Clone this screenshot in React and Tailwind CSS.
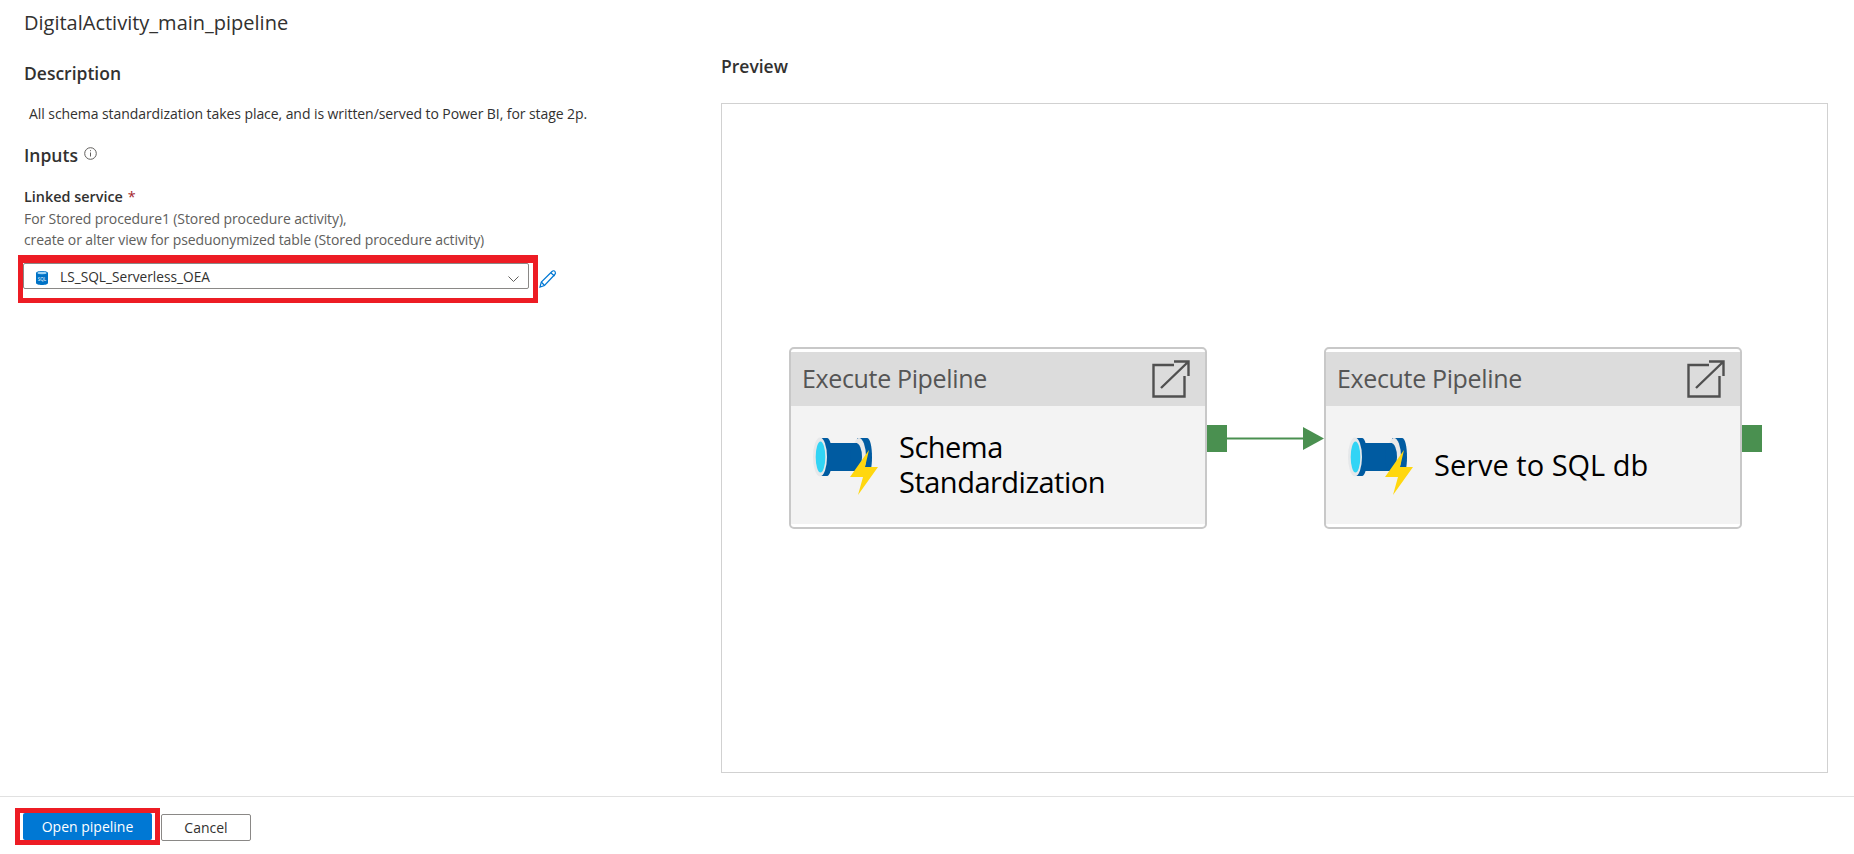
import React from 'react';

const font = { fontFamily: '"Open Sans", "Noto Sans", sans-serif' };

// Pipeline glyph: barrel with a lightning bolt over it
const PipelineIcon = () => (
  <svg width="66" height="58" viewBox="0 0 66 58" className="shrink-0">
    <path d="M6 1h8c3 0 5 8 5 19s-2 19-5 19H6z" fill="#005ba1" />
    <path d="M44 1h10c3 0 5 8 5 19s-2 19-5 19H44z" fill="#005ba1" />
    <ellipse cx="46" cy="20" rx="7" ry="19" fill="#e8e8e8" />
    <rect x="12" y="6" width="32" height="28" fill="#005ba1" />
    <ellipse cx="43" cy="20" rx="6" ry="14" fill="#005ba1" />
    <ellipse cx="7" cy="20" rx="7" ry="19.5" fill="#e6e8ea" />
    <ellipse cx="7.5" cy="20" rx="4.8" ry="15.5" fill="#32d4f5" />
    <path d="M56 13 37 40h13l-5 18 20-28H52z" fill="#ffd70f" />
  </svg>
);

const ExternalIcon = () => (
  <svg width="38" height="38" viewBox="0 0 38 38" fill="none" stroke="#505050" strokeWidth="2.4" className="shrink-0">
    <path d="M22 5H1.5v31.5h31V16" />
    <path d="M9 28 36.5 1.5M22 1.5h14.5V16" />
  </svg>
);

const PipelineCard = ({ children }) => (
  <div className="w-[418px] h-[182px] shrink-0 rounded-[5px] border-2 border-[#c8c8c8] bg-white py-[3px] flex flex-col">
    <div className="h-[54px] bg-[#dcdcdc] flex items-center justify-between pl-[11px] pr-[15px]">
      <span className="text-[25px] text-[#555555] tracking-[-0.35px]">Execute Pipeline</span>
      <ExternalIcon />
    </div>
    <div className="flex-1 bg-[#f3f3f3] flex items-start pl-[22px] pt-[31px]">
      <PipelineIcon />
      <div className="ml-[20px] -mt-[9px] h-[72px] flex items-center text-[29px] leading-[35px] text-black">
        {children}
      </div>
    </div>
  </div>
);

const GreenHandle = () => <div className="w-[20px] h-[27px] bg-[#4a9050] shrink-0" />;

const Connector = () => (
  <svg width="97" height="27" viewBox="0 0 97 27" className="shrink-0">
    <line x1="0" y1="13.5" x2="80" y2="13.5" stroke="#4a9050" strokeWidth="2" />
    <path d="M76 2l21 11.5L76 25z" fill="#4a9050" />
  </svg>
);

export default function App() {
  return (
    <div className="w-[1854px] h-[854px] bg-white flex flex-col overflow-hidden text-[#323130]" style={font}>
      <div className="h-[796px] flex">
        <div className="w-[721px] shrink-0 pl-[24px]">
          <div className="h-[45px] flex items-center text-[20px] text-[#323130]">DigitalActivity_main_pipeline</div>
          <div className="h-[56px] flex items-center text-[17.5px] font-semibold">Description</div>
          <div className="h-[24px] flex items-center pl-[5px] text-[14px] tracking-[-0.07px]">All schema standardization takes place, and is written/served to Power BI, for stage 2p.</div>
          <div className="mt-[10px] h-[40px] flex items-center text-[17.5px] font-semibold">
            Inputs
            <svg width="13" height="13" viewBox="0 0 13 13" fill="none" stroke="#605e5c" strokeWidth="1" className="ml-[6px] -mt-[4px]">
              <circle cx="6.5" cy="6.5" r="5.8" />
              <path d="M6.5 5.5v4M6.5 3.2v1" />
            </svg>
          </div>
          <div className="mt-[10px] h-[24px] flex items-center text-[14.4px] font-semibold">
            Linked service
            <span className="ml-[5px] text-[#a4262c] font-normal">*</span>
          </div>
          <div className="-mt-[1px] text-[14px] leading-[21px] tracking-[-0.1px] text-[#605e5c]">
            <div>For Stored procedure1 (Stored procedure activity),</div>
            <div>create or alter view for pseduonymized table (Stored procedure activity)</div>
          </div>
          <div className="-ml-[6px] mt-[5px] flex items-start">
            <div className="w-[520px] h-[48px] border-[5px] border-t-[8px] border-[#ed1c24] bg-white pr-[4px]">
              <div className="h-[26px] border border-[#8a8886] rounded-[2px] flex items-center pl-[12px] pr-[9px]">
                <svg width="12" height="14" viewBox="0 0 12 14" className="shrink-0 mt-[4px]">
                  <path d="M0 2C0 .9 2.7 0 6 0s6 .9 6 2v10c0 1.1-2.7 2-6 2s-6-.9-6-2z" fill="#0072c6" />
                  <ellipse cx="6" cy="2" rx="4.6" ry="1.2" fill="#9fd4f5" />
                  <text x="6" y="9.5" textAnchor="middle" fontSize="4.5" fill="#ffffff">SQL</text>
                </svg>
                <span className="ml-[12px] mt-[2px] text-[13.7px] flex-1">LS_SQL_Serverless_OEA</span>
                <svg width="11" height="6" viewBox="0 0 11 6" fill="none" stroke="#605e5c" strokeWidth="1" className="mt-[6px]">
                  <path d="M.5.5l5 5 5-5" />
                </svg>
              </div>
            </div>
            <svg width="18" height="18" viewBox="0 0 18 18" fill="none" stroke="#0078d4" strokeWidth="1.2" className="ml-[1px] mt-[15px]">
              <path d="M1 17l1.3-5L13 1.5c1-1 2.3-1 3 0s.7 2-.2 3L5.5 15.5z" />
              <path d="M12 3l3.5 3M2.3 12l3.2 3.500" />
            </svg>
          </div>
        </div>
        <div className="flex-1 pr-[26px] flex flex-col">
          <div className="h-[103px] pt-[54px] text-[17.5px] leading-[24px] font-semibold">Preview</div>
          <div className="h-[670px] border border-[#d1d1d1] flex items-start pl-[67px] pt-[243px]">
            <PipelineCard>
              <span className="tracking-[-0.5px]">Schema<br />Standardization</span>
            </PipelineCard>
            <div className="flex items-start mt-[78px]">
              <GreenHandle />
              <Connector />
            </div>
            <PipelineCard>Serve to SQL db</PipelineCard>
            <div className="mt-[78px]">
              <GreenHandle />
            </div>
          </div>
        </div>
      </div>
      <div className="flex-1 border-t border-[#e1e1e1] pl-[15px] pt-[11px] flex items-start">
        <div className="w-[145px] h-[37px] border-[5px] border-[#ed1c24] bg-white px-[3px]">
          <button className="w-full h-[27px] bg-[#0078d4] rounded-[2px] text-white text-[14px]">Open pipeline</button>
        </div>
        <button className="ml-[1px] mt-[6px] w-[90px] h-[27px] border border-[#8a8886] rounded-[2px] bg-white text-[14px] text-[#323130]">Cancel</button>
      </div>
    </div>
  );
}
